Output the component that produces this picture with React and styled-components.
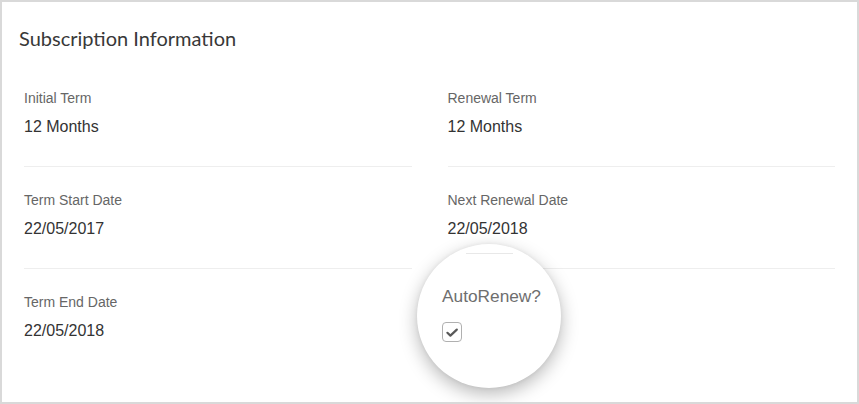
import React from 'react';
import styled, { createGlobalStyle } from 'styled-components';

const GlobalStyle = createGlobalStyle`
  html, body {
    margin: 0;
    padding: 0;
    background: #ffffff;
  }
  * { box-sizing: border-box; }
`;

const Card = styled.section`
  position: relative;
  width: 859px;
  height: 404px;
  border: 2px solid #d9d9d9;
  background: #ffffff;
  padding-top: 24px;
  font-family: "Liberation Sans", Arial, sans-serif;
  overflow: hidden;
`;

const Title = styled.h2`
  margin: 0 0 15px;
  padding-left: 17px;
  font-family: Lato, "Open Sans", sans-serif;
  font-weight: 400;
  font-size: 20px;
  line-height: 24px;
  color: #383838;
`;

const Grid = styled.div`
  display: grid;
  grid-template-columns: 1fr 1fr;
  column-gap: 36px;
  padding: 0 22px;
`;

const Field = styled.div`
  padding: 23px 0 ${(p) => (p.last ? 0 : 28)}px;
  border-bottom: ${(p) => (p.last ? 'none' : '1px solid #eeeeee')};
`;

const Label = styled.div`
  font-size: 14px;
  line-height: 20px;
  color: #666666;
`;

const Value = styled.div`
  margin-top: 8px;
  font-size: 16px;
  line-height: 22px;
  color: #333333;
`;

const Box = styled.span`
  display: inline-flex;
  align-items: center;
  justify-content: center;
  width: ${(p) => p.size}px;
  height: ${(p) => p.size}px;
  margin-top: ${(p) => p.gap}px;
  border: 1.5px solid #b0b0b0;
  border-radius: 4px;
  background: #ffffff;
`;

const Magnifier = styled.div`
  position: absolute;
  left: 415px;
  top: 242px;
  width: 144px;
  height: 144px;
  border-radius: 50%;
  background: #ffffff;
  box-shadow: 0 6px 18px rgba(0, 0, 0, 0.28), 0 0 4px rgba(0, 0, 0, 0.06);
  display: flex;
  flex-direction: column;
  padding-top: 9px;
`;

const ZoomRule = styled.div`
  align-self: center;
  width: 47px;
  height: 1px;
  background: #e8e8e8;
`;

const ZoomBody = styled.div`
  padding-left: 25px;
  margin-top: 32px;
  display: flex;
  flex-direction: column;
  align-items: flex-start;
`;

const ZoomLabel = styled.div`
  font-size: 17.3px;
  line-height: 20px;
  color: #6e6e6e;
`;

const Check = ({ size = 20, gap = 0 }) => (
  <Box size={size} gap={gap}>
    <svg width={size - 3} height={size - 3} viewBox="0 0 17 17">
      <polyline
        points="3.4,8.8 6.4,11.6 12.8,5.6"
        fill="none"
        stroke="#595959"
        strokeWidth="2.2"
        strokeLinecap="round"
        strokeLinejoin="round"
      />
    </svg>
  </Box>
);

const fields = [
  ['Initial Term', '12 Months'],
  ['Renewal Term', '12 Months'],
  ['Term Start Date', '22/05/2017'],
  ['Next Renewal Date', '22/05/2018'],
  ['Term End Date', '22/05/2018'],
];

const App = () => (
  <>
    <GlobalStyle />
    <Card>
      <Title>Subscription Information</Title>
      <Grid>
        {fields.map(([label, value], i) => (
          <Field key={label} last={i >= 4}>
            <Label>{label}</Label>
            <Value>{value}</Value>
          </Field>
        ))}
        {/* AutoRenew cell sits under the magnifier, shown enlarged there */}
        <Field last />
      </Grid>
      <Magnifier>
        <ZoomRule />
        <ZoomBody>
          <ZoomLabel>AutoRenew?</ZoomLabel>
          <Check size={20} gap={16} />
        </ZoomBody>
      </Magnifier>
    </Card>
  </>
);

export default App;
